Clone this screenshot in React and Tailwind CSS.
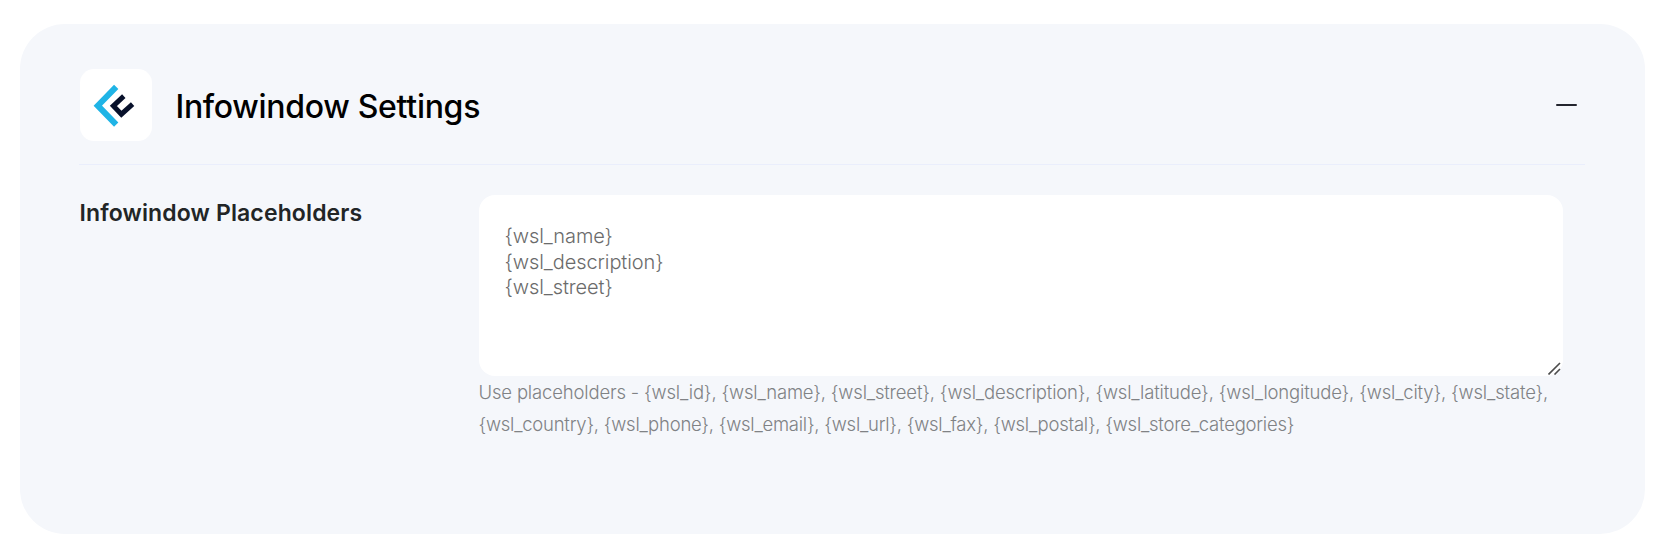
import { useState } from 'react';

const PLACEHOLDERS = '{wsl_name}\n{wsl_description}\n{wsl_street}';

function Logo() {
  return (
    <svg className="-ml-[3px] mt-[2px]" width="42" height="44" viewBox="0 0 42 44" fill="none">
      <path d="M23.2 2.8 4.8 21.7 23.2 40.6" stroke="#1fb4e6" strokeWidth="6" />
      <path d="M30.8 12.2 20.4 21.9 28.4 30.2 39.6 20.2" stroke="#08112b" strokeWidth="5" />
    </svg>
  );
}

export default function App() {
  const [open, setOpen] = useState(true);

  return (
    <div className="bg-white h-[557px] pt-6 pl-[19.5px] font-['Inter',sans-serif]">
      <div className="w-[1625px] h-[510px] bg-[#f5f7fb] rounded-[45px] px-[59.5px] pt-[45px]">
        {/* Header */}
        <div className="w-[1506px] h-24 flex items-start border-b border-[#eaeefc]">
          <div className="w-[72px] h-[72px] ml-[0.5px] bg-white rounded-[14px] flex items-center justify-center">
            <Logo />
          </div>
          <h2 className="ml-6 mt-3.5 text-[32px] leading-[48px] font-medium tracking-[-0.3px] text-black whitespace-nowrap">
            Infowindow Settings
          </h2>
          <button onClick={() => setOpen(!open)} className="ml-auto mr-2 mt-[35px] w-[21px] h-[2px] bg-[#23252e] rounded-full" aria-label="Toggle" />
        </div>

        {/* Fields */}
        {open && (
          <div className="flex pt-[30px]">
            <label className="w-[399.5px] shrink-0 pl-[0.5px] text-[23px] leading-9 font-semibold tracking-[0.13px] text-[#222526] whitespace-nowrap">
              Infowindow Placeholders
            </label>
            <div className="w-[1084px]">
              <div className="relative">
                <textarea
                  className="block w-full h-[181px] bg-white rounded-[16px] px-[26px] pt-[29px] text-[20px] leading-[25.5px] font-light tracking-[-0.08px] text-[#6b6b6b] resize-none outline-none overflow-hidden"
                  defaultValue={PLACEHOLDERS}
                />
                {/* Resize grip */}
                <svg className="absolute right-[2px] bottom-px" width="13" height="13" viewBox="0 0 13 13" stroke="#4c4c4c" strokeWidth="1.6">
                  <path d="M0.5 12.5 12 1M6.5 12.5 12 7" />
                </svg>
              </div>
              <p className="text-[18.5px] leading-8 font-light tracking-[-0.17px] text-[#808285] whitespace-nowrap">
                Use placeholders - {'{wsl_id}, {wsl_name}, {wsl_street}, {wsl_description}, {wsl_latitude}, {wsl_longitude}, {wsl_city}, {wsl_state},'}
                <br />
                <span className="tracking-[-0.24px]">
                  {'{wsl_country}, {wsl_phone}, {wsl_email}, {wsl_url}, {wsl_fax}, {wsl_postal}, {wsl_store_categories}'}
                </span>
              </p>
            </div>
          </div>
        )}
      </div>
    </div>
  );
}
